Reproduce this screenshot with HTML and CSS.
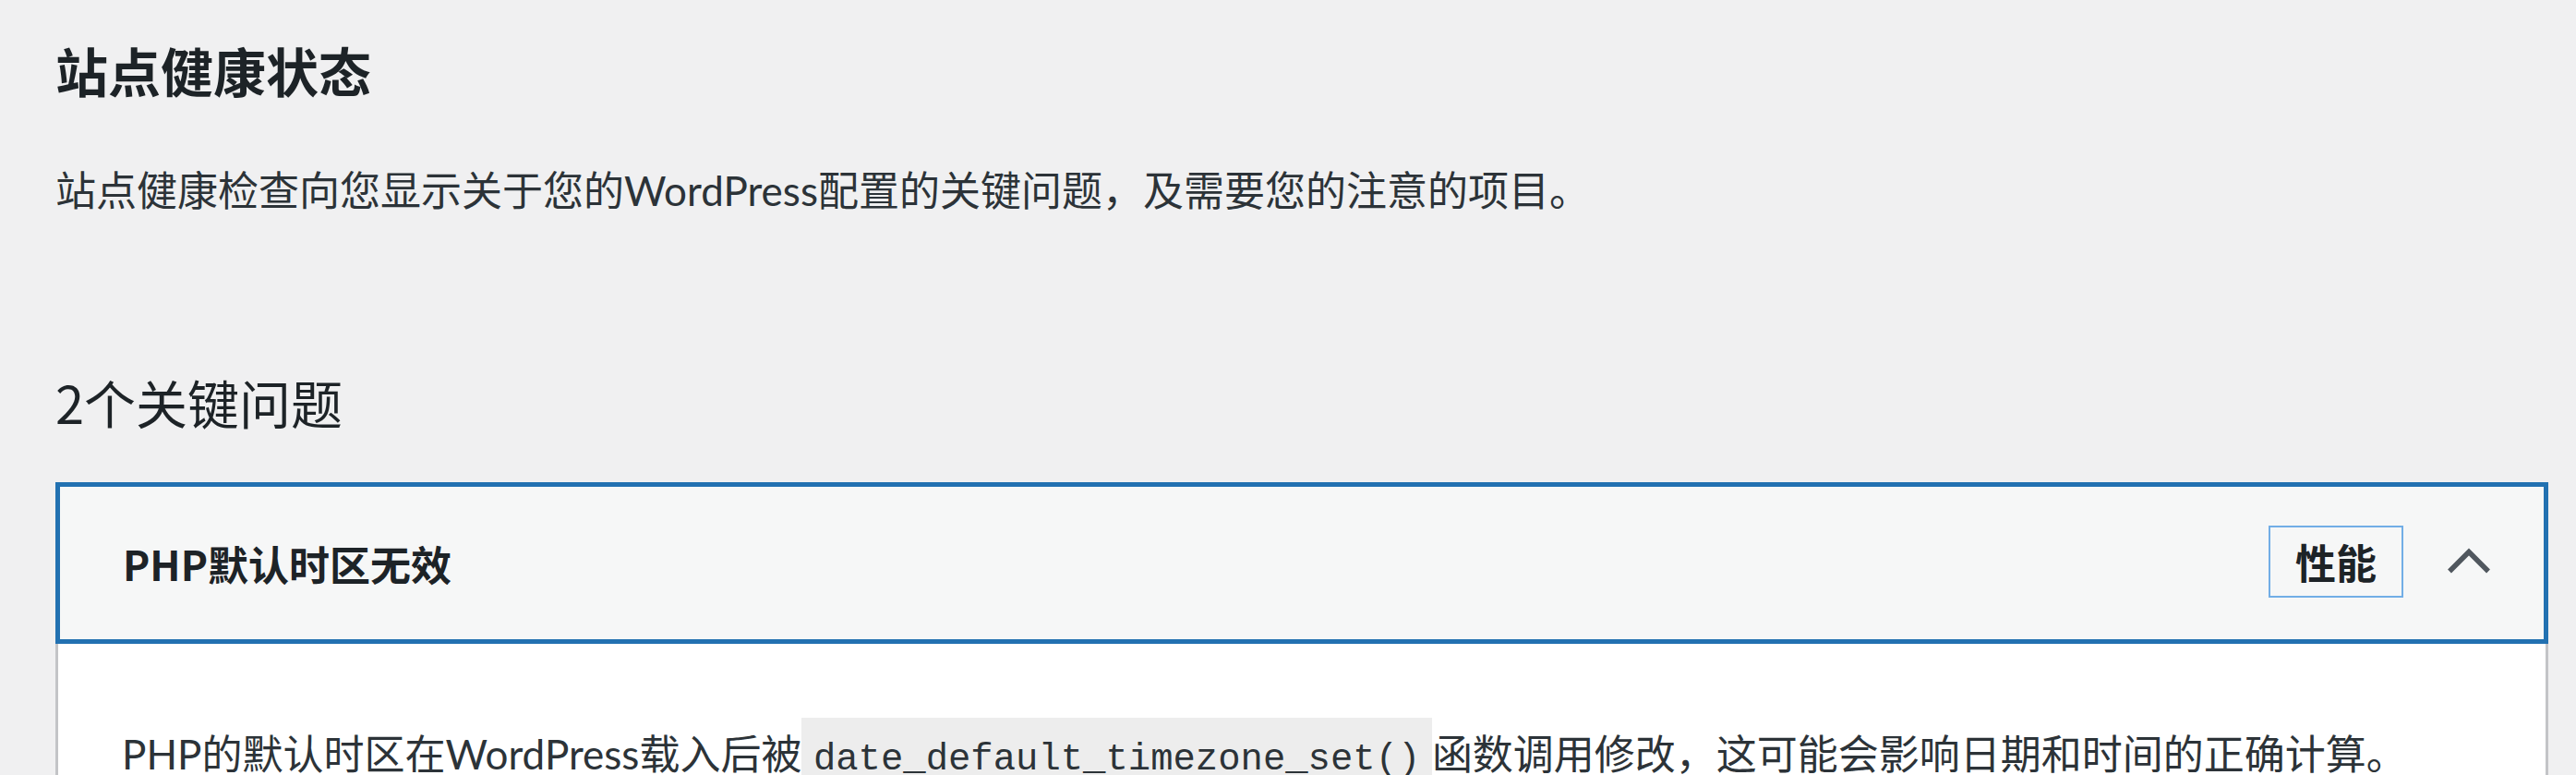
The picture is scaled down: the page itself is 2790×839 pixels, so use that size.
FILE: index.html
```html
<!DOCTYPE html>
<html lang="zh-CN">
<head>
<meta charset="utf-8">
<title>站点健康状态</title>
<link rel="stylesheet" href="styles.css">
</head>
<body>
<div class="wrap">
  <h1 class="page-title">站点健康状态</h1>
  <p class="page-desc">站点健康检查向您显示关于您的WordPress配置的关键问题，及需要您的注意的项目。</p>
  <h2 class="issues-count">2个关键问题</h2>
  <div class="accordion">
    <div class="acc-head">
      <span class="acc-title">PHP默认时区无效</span>
      <span class="badge">性能</span>
      <svg class="chevron" width="50" height="30" viewBox="0 0 50 30" aria-hidden="true">
        <polyline points="4,26.5 25,5.5 46,26.5" fill="none" stroke="#50575e" stroke-width="5.5" stroke-linejoin="miter"/>
      </svg>
    </div>
    <div class="acc-body">
      <p>PHP的默认时区在WordPress载入后被<code>date_default_timezone_set()</code>函数调用修改，这可能会影响日期和时间的正确计算。</p>
    </div>
  </div>
</div>
</body>
</html>
```
FILE: styles.css
```css
html, body {
  margin: 0;
  padding: 0;
}
body {
  background: #f0f0f1;
  color: #1d2327;
  font-family: "Noto Sans CJK SC", "Noto Sans", sans-serif;
  overflow: hidden;
}
.wrap {
  padding: 47px 30px 0 60px;
}
.page-title {
  margin: 0;
  font-size: 57px;
  line-height: 1;
  font-weight: 700;
}
.page-desc {
  margin: 80px 0 0;
  font-family: Lato, "Noto Sans CJK SC", sans-serif;
  font-size: 44px;
  line-height: 1;
  color: #2c3338;
}
.issues-count {
  margin: 179px 0 0;
  font-size: 56px;
  line-height: 1;
  font-weight: 400;
}
.accordion {
  margin-top: 59px;
}
.acc-head {
  display: flex;
  align-items: center;
  height: 165px;
  border: 5px solid #2271b1;
  background: #f6f7f7;
  padding: 0 56px 0 68px;
}
.acc-title {
  font-size: 44px;
  line-height: 1;
  font-weight: 700;
}
.badge {
  margin-left: auto;
  border: 2px solid #72aee6;
  padding: 15px 27px;
  font-size: 44px;
  line-height: 1;
  font-weight: 700;
  margin-top: -3px;
}
.chevron {
  display: block;
  margin-left: 46px;
  margin-top: -6px;
}
.acc-body {
  background: #fff;
  border-left: 3px solid #c3c4c7;
  border-right: 3px solid #c3c4c7;
  padding: 97px 69px 0;
}
.acc-body p {
  margin: 0;
  font-family: Lato, "Noto Sans CJK SC", sans-serif;
  font-size: 44px;
  line-height: 1;
  color: #2c3338;
}
.acc-body code {
  font-family: "Liberation Mono", "DejaVu Sans Mono", monospace;
  font-size: 40.6px;
  background: rgba(0, 0, 0, 0.07);
  padding: 22px 12.5px 5px;
  color: #2c3338;
}
```
